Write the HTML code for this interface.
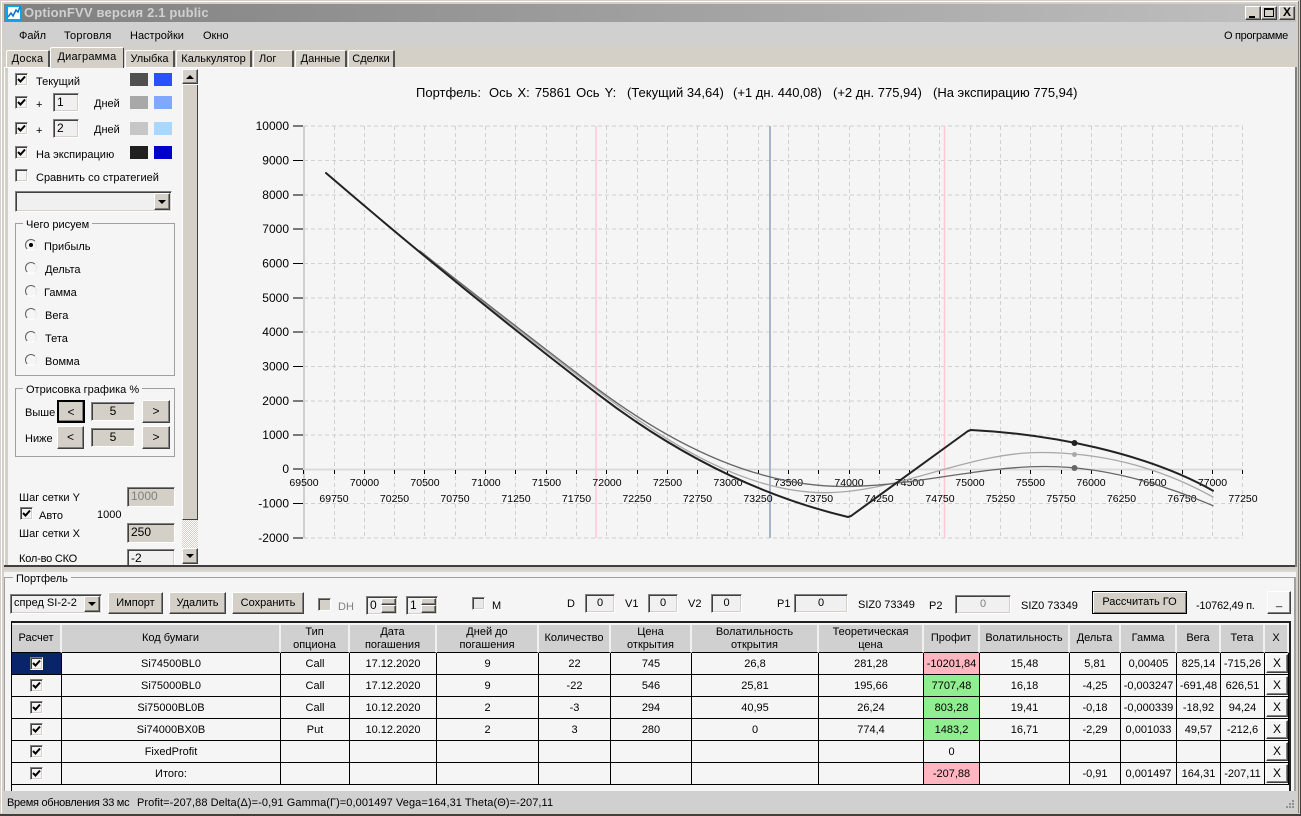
<!DOCTYPE html>
<html><head><meta charset="utf-8"><style>
html,body{margin:0;padding:0;width:1301px;height:816px;overflow:hidden;background:#d4d0c8}
body{font:11px "Liberation Sans","Noto Sans CJK SC",sans-serif;color:#000;position:relative}
div,span.a{position:absolute;box-sizing:border-box}
.t{position:absolute;white-space:nowrap;line-height:14px;height:14px;margin-top:1px}
.h{font-size:13px}
.g{color:#808080}
.sk{background:#f0f0f0;border:1px solid;border-color:#808080 #fff #fff #808080;box-shadow:inset 1px 1px 0 #404040,inset -1px -1px 0 #d4d0c8;text-align:center;line-height:17px;white-space:nowrap}
.rb{background:#d4d0c8;border:1px solid;border-color:#fff #404040 #404040 #fff;box-shadow:inset -1px -1px 0 #808080;text-align:center;white-space:nowrap}
.cb{width:13px;height:13px;background:#f5f5f5;border:1px solid;border-color:#808080 #fff #fff #808080;box-shadow:inset 1px 1px 0 #404040,inset -1px -1px 0 #d4d0c8}
.cb svg{position:absolute;left:1px;top:1px}
.rd{width:12px;height:12px;border-radius:50%;background:#f5f5f5;border:1px solid;border-color:#606060 #e8e8e8 #fff #606060}
.gb{border:1px solid #a0a0a0}
.lg{position:absolute;background:#f5f5f5;padding:0 3px;line-height:14px;white-space:nowrap}
.tab{background:#d4d0c8;border-top:1px solid #fff;border-left:1px solid #fff;border-right:2px solid #505050;text-align:center;line-height:17px;border-radius:2px 2px 0 0}
.sw{width:18px;height:13px}
table{position:absolute;left:12px;top:625px;border-collapse:separate;border-spacing:0;table-layout:fixed;width:1277px}
th{background:#d0d0d0;font-weight:normal;height:28px;padding:0;border-right:2px solid #f0f0f0;border-bottom:1px solid #000;line-height:13px;overflow:hidden;box-sizing:border-box}
td{height:22px;padding:0;text-align:center;border-right:1px solid #000;border-bottom:1px solid #000;background:#f5f5f5;box-sizing:border-box;position:relative;white-space:nowrap;overflow:hidden}
.r{background:#ffb6c1}.n{background:#90ee90}.s{background:#0a246a}
td .cb{left:18px;top:4px}
.x{left:1px;top:1px;width:22px;height:19px;line-height:17px;background:#f5f5f5;font-size:12px}
</style></head><body>
<svg width="0" height="0" style="position:absolute"><symbol id="ck" viewBox="0 0 9 9"><path d="M1 4l2.5 2.5L8 1.5" fill="none" stroke="#000" stroke-width="2"/></symbol></svg>

<!-- window chrome -->
<div style="left:0;top:0;width:1301px;height:816px;background:#d4d0c8;border-right:1px solid #404040;border-bottom:2px solid #404040"></div>
<div style="left:1px;top:1px;width:1298px;height:1px;background:#fff"></div>
<div style="left:1px;top:1px;width:1px;height:812px;background:#fff"></div>
<div style="left:1298px;top:1px;width:1px;height:812px;background:#808080"></div>
<div style="left:4px;top:4px;width:1292px;height:18px;background:linear-gradient(90deg,#808080,#c0c0c0)"></div>
<div style="left:6px;top:5px;width:16px;height:16px;background:#0aa5e8"><svg width="16" height="16"><rect x="2" y="2" width="12" height="12" fill="#fff"/><path d="M2 12l3-4 2 3 3-6 2 2 2-5" fill="none" stroke="#0a70d0" stroke-width="1.5"/></svg></div>
<div class="t" style="left:24px;top:5px;font-weight:bold;font-size:13px;letter-spacing:.17px;color:#d0d0d0">OptionFVV версия 2.1 public</div>
<div class="rb" style="left:1245px;top:6px;width:16px;height:14px"><div style="left:3px;top:9px;width:6px;height:2px;background:#000"></div></div>
<div class="rb" style="left:1261px;top:6px;width:16px;height:14px"><div style="left:2px;top:1px;width:10px;height:9px;border:1px solid #000;border-top-width:2px"></div></div>
<div class="rb" style="left:1279px;top:6px;width:16px;height:14px;font-weight:bold;line-height:11px;font-size:12px">X</div>

<div style="left:4px;top:22px;width:1292px;height:24px;background:#d0d0d0"></div>
<div class="t" style="left:19px;top:28px">Файл</div>
<div class="t" style="left:64px;top:28px;letter-spacing:.2px">Торговля</div>
<div class="t" style="left:130px;top:28px">Настройки</div>
<div class="t" style="left:203px;top:28px">Окно</div>
<div class="t" style="left:1224px;top:28px;letter-spacing:-.3px">О программе</div>

<!-- tabs -->
<div class="tab" style="left:6px;top:50px;width:44px;height:17px;letter-spacing:.3px">Доска</div>
<div class="tab" style="left:50px;top:47px;width:74px;height:21px;z-index:2;line-height:19px;border-right:1px solid #404040;letter-spacing:.2px">Диаграмма</div>
<div class="tab" style="left:125px;top:50px;width:50px;height:17px">Улыбка</div>
<div class="tab" style="left:176px;top:50px;width:76px;height:17px">Калькулятор</div>
<div class="tab" style="left:253px;top:50px;width:41px;height:17px;text-align:left;padding-left:5px">Лог</div>
<div class="tab" style="left:295px;top:50px;width:52px;height:17px">Данные</div>
<div class="tab" style="left:348px;top:50px;width:47px;height:17px">Сделки</div>

<!-- main panel -->
<div style="left:4px;top:67px;width:1292px;height:500px;background:#d4d0c8;border-top:1px solid #fff;border-left:1px solid #fff"></div>
<div style="left:8px;top:68px;width:1287px;height:497px;background:#f5f5f5"></div>
<div style="left:4px;top:565px;width:1292px;height:2px;background:#404040"></div>
<div style="left:1295px;top:67px;width:2px;height:500px;background:#808080"></div>

<!-- scrollbar -->
<div style="left:182px;top:85px;width:16px;height:435px;background:#d4d0c8;border-right:1px solid #404040;border-bottom:1px solid #404040;border-left:1px solid #fff"></div>
<div style="left:182px;top:520px;width:16px;height:28px;background:repeating-conic-gradient(#d4d0c8 0 25%,#fff 0 50%) 0 0/2px 2px"></div>
<div class="rb" style="left:182px;top:69px;width:16px;height:15px"><svg width="12" height="12" style="position:absolute;left:1px;top:1px"><path d="M2 8h8L6 4z"/></svg></div>
<div class="rb" style="left:182px;top:548px;width:16px;height:16px"><svg width="12" height="12" style="position:absolute;left:1px;top:1px"><path d="M2 4h8L6 8z"/></svg></div>

<!-- left controls -->
<div class="cb" style="left:15px;top:73px"><svg width="9" height="9"><use href="#ck"/></svg></div>
<div class="t" style="left:36px;top:74px">Текущий</div>
<div class="sw" style="left:130px;top:73px;background:#505050"></div><div class="sw" style="left:154px;top:73px;background:#2a50ff"></div>

<div class="cb" style="left:15px;top:96px"><svg width="9" height="9"><use href="#ck"/></svg></div>
<div class="t" style="left:36px;top:97px">+</div>
<div class="sk" style="left:53px;top:93px;width:26px;height:19px;text-align:left;padding-left:3px;font-size:12px">1</div>
<div class="t" style="left:94px;top:96px">Дней</div>
<div class="sw" style="left:130px;top:96px;background:#a8a8a8"></div><div class="sw" style="left:154px;top:96px;background:#7fa8ff"></div>

<div class="cb" style="left:15px;top:122px"><svg width="9" height="9"><use href="#ck"/></svg></div>
<div class="t" style="left:36px;top:123px">+</div>
<div class="sk" style="left:53px;top:119px;width:26px;height:19px;text-align:left;padding-left:3px;font-size:12px">2</div>
<div class="t" style="left:94px;top:122px">Дней</div>
<div class="sw" style="left:130px;top:122px;background:#c6c6c6"></div><div class="sw" style="left:154px;top:122px;background:#a8d8ff"></div>

<div class="cb" style="left:15px;top:146px"><svg width="9" height="9"><use href="#ck"/></svg></div>
<div class="t" style="left:36px;top:147px">На экспирацию</div>
<div class="sw" style="left:130px;top:146px;background:#202020"></div><div class="sw" style="left:154px;top:146px;background:#0000cc"></div>

<div class="cb" style="left:15px;top:169px"></div>
<div class="t" style="left:36px;top:170px">Сравнить со стратегией</div>

<div class="sk" style="left:15px;top:191px;width:157px;height:21px"></div>
<div class="rb" style="left:154px;top:193px;width:16px;height:17px"><svg width="12" height="12" style="position:absolute;left:1px;top:2px"><path d="M2 4h8L6 8z"/></svg></div>

<div class="gb" style="left:15px;top:223px;width:160px;height:153px"></div>
<div class="lg" style="left:23px;top:218px">Чего рисуем</div>
<div class="rd" style="left:25px;top:239px"><div style="left:3px;top:3px;width:4px;height:4px;background:#000;border-radius:50%"></div></div><div class="t" style="left:44px;top:239px">Прибыль</div>
<div class="rd" style="left:25px;top:262px"></div><div class="t" style="left:45px;top:262px">Дельта</div>
<div class="rd" style="left:25px;top:285px"></div><div class="t" style="left:44px;top:285px">Гамма</div>
<div class="rd" style="left:25px;top:308px"></div><div class="t" style="left:45px;top:308px">Вега</div>
<div class="rd" style="left:25px;top:331px"></div><div class="t" style="left:45px;top:331px">Тета</div>
<div class="rd" style="left:25px;top:354px"></div><div class="t" style="left:45px;top:354px">Вомма</div>

<div class="gb" style="left:15px;top:388px;width:160px;height:69px"></div>
<div class="lg" style="left:23px;top:383px">Отрисовка графика %</div>
<div class="t" style="left:25px;top:405px">Выше</div>
<div class="rb" style="left:57px;top:400px;width:28px;height:23px;line-height:20px;border:2px solid #000;font-size:12px">&lt;</div>
<div class="sk" style="left:91px;top:402px;width:44px;height:19px;background:#d4d0c8;font-size:12px">5</div>
<div class="rb" style="left:142px;top:400px;width:28px;height:23px;line-height:20px;font-size:12px">&gt;</div>
<div class="t" style="left:25px;top:431px">Ниже</div>
<div class="rb" style="left:57px;top:426px;width:27px;height:23px;line-height:20px;font-size:12px">&lt;</div>
<div class="sk" style="left:91px;top:428px;width:44px;height:19px;background:#d4d0c8;font-size:12px">5</div>
<div class="rb" style="left:142px;top:426px;width:28px;height:23px;line-height:20px;font-size:12px">&gt;</div>

<div class="t" style="left:19px;top:490px">Шаг сетки Y</div>
<div class="sk" style="left:127px;top:487px;width:48px;height:20px;background:#d4d0c8;color:#808080;text-align:left;padding-left:3px;font-size:12px">1000</div>
<div class="cb" style="left:20px;top:507px"><svg width="9" height="9"><use href="#ck"/></svg></div>
<div class="t" style="left:39px;top:508px">Авто</div>
<div class="t" style="left:97px;top:507px">1000</div>
<div class="t" style="left:19px;top:526px">Шаг сетки X</div>
<div class="sk" style="left:127px;top:523px;width:48px;height:20px;background:#d4d0c8;text-align:left;padding-left:3px;font-size:12px">250</div>
<div style="left:8px;top:549px;width:174px;height:16px;overflow:hidden">
  <div class="t" style="left:11px;top:2px;letter-spacing:-.2px">Кол-во СКО</div>
  <div class="sk" style="left:119px;top:0;width:48px;height:22px;background:#f0f0f0;text-align:left;padding-left:3px;font-size:12px">-2</div>
</div>

<!-- chart title -->
<div class="t h" style="left:416px;top:85px">Портфель:</div>
<div class="t h" style="left:489px;top:85px;word-spacing:1.5px">Ось X: 75861 Ось Y:</div>
<div class="t h" style="left:627px;top:85px">(Текущий 34,64)</div>
<div class="t h" style="left:733px;top:85px">(+1 дн. 440,08)</div>
<div class="t h" style="left:833px;top:85px">(+2 дн. 775,94)</div>
<div class="t h" style="left:933px;top:85px">(На экспирацию 775,94)</div>

<!-- chart -->
<svg width="1301" height="816" style="position:absolute;left:0;top:0;pointer-events:none" font-family="Liberation Sans, sans-serif">
<g fill="none" stroke="#d0d0d0" stroke-dasharray="4 3" stroke-width="1">
<path d="M304 126H1243M304 160.5H1243M304 195H1243M304 229H1243M304 263.5H1243M304 298H1243M304 332H1243M304 366.5H1243M304 401H1243M304 435H1243M304 503.5H1243M304 538H1243"/>
<path d="M334.5 126V538M364.5 126V538M394.5 126V538M424.5 126V538M455.5 126V538M485.5 126V538M515.5 126V538M546.5 126V538M576.5 126V538M606.5 126V538M637.5 126V538M667.5 126V538M697.5 126V538M727.5 126V538M758.5 126V538M788.5 126V538M818.5 126V538M849.5 126V538M879.5 126V538M909.5 126V538M939.5 126V538M970.5 126V538M1000.5 126V538M1030.5 126V538M1061.5 126V538M1091.5 126V538M1121.5 126V538M1152.5 126V538M1182.5 126V538M1212.5 126V538M1242.5 126V538"/>
</g>
<path d="M304 126V538" stroke="#d0d0d0" stroke-width="2"/>
<path d="M303 469.5H1243" stroke="#dadada" stroke-width="2"/>
<path d="M293 126H303M293 160.5H303M293 195H303M293 229H303M293 263.5H303M293 298H303M293 332H303M293 366.5H303M293 401H303M293 435H303M293 469H303M293 503.5H303M293 538H303" stroke="#000"/>
<path d="M303.5 470v4M334.5 470v4M364.5 470v4M394.5 470v4M424.5 470v4M455.5 470v4M485.5 470v4M515.5 470v4M546.5 470v4M576.5 470v4M606.5 470v4M637.5 470v4M667.5 470v4M697.5 470v4M727.5 470v4M758.5 470v4M788.5 470v4M818.5 470v4M849.5 470v4M879.5 470v4M909.5 470v4M939.5 470v4M970.5 470v4M1000.5 470v4M1030.5 470v4M1061.5 470v4M1091.5 470v4M1121.5 470v4M1152.5 470v4M1182.5 470v4M1212.5 470v4M1242.5 470v4" stroke="#000"/>
<path d="M596 126V538M944.5 126V538" stroke="#ffc8d0" stroke-width="1.5"/>
<path d="M770 126V538" stroke="#a8b4c8" stroke-width="2"/>
<g font-size="12" text-anchor="end" fill="#000">
<text x="289" y="130">10000</text><text x="289" y="164.5">9000</text><text x="289" y="199">8000</text><text x="289" y="233">7000</text><text x="289" y="267.5">6000</text><text x="289" y="302">5000</text><text x="289" y="336">4000</text><text x="289" y="370.5">3000</text><text x="289" y="405">2000</text><text x="289" y="439">1000</text><text x="289" y="473">0</text><text x="289" y="507.5">-1000</text><text x="289" y="542">-2000</text>
</g>
<g font-size="10.5" text-anchor="middle" fill="#000">
<text x="304" y="486">69500</text><text x="364.5" y="486">70000</text><text x="425" y="486">70500</text><text x="486" y="486">71000</text><text x="546.5" y="486">71500</text><text x="607" y="486">72000</text><text x="667.5" y="486">72500</text><text x="728" y="486">73000</text><text x="788.5" y="486">73500</text><text x="849" y="486">74000</text><text x="909.5" y="486">74500</text><text x="970" y="486">75000</text><text x="1030.5" y="486">75500</text><text x="1091" y="486">76000</text><text x="1152" y="486">76500</text><text x="1212.5" y="486">77000</text>
<text x="334" y="502">69750</text><text x="394.5" y="502">70250</text><text x="455" y="502">70750</text><text x="516" y="502">71250</text><text x="576.5" y="502">71750</text><text x="637" y="502">72250</text><text x="697.5" y="502">72750</text><text x="758" y="502">73250</text><text x="818.5" y="502">73750</text><text x="879" y="502">74250</text><text x="940" y="502">74750</text><text x="1000.5" y="502">75250</text><text x="1061" y="502">75750</text><text x="1121.5" y="502">76250</text><text x="1182" y="502">76750</text><text x="1243" y="502">77250</text>
</g>
<g fill="none" stroke-linejoin="round" stroke-linecap="round">
<path stroke="#a8a8a8" stroke-width="1.3" d="M420 252C479 299 538 345.5 596.7 390C673 448 749 492.7 825 492.7C897 492.7 968 452.5 1040 452.5C1098 452.5 1155 465 1213 497"/>
<path stroke="#666" stroke-width="1.3" d="M420 251C479 298 538 343.5 596.7 388.3C680 450.5 762 486.5 845 486.5C912 486.5 978 466.5 1045 466.5C1101 466.5 1157 481.6 1213 505.7"/>
<path stroke="#222" stroke-width="2" d="M326 173Q461.35 289.4 596.7 393.3C680.5 457.7 764.2 497 848 517L851 516L968 431L971 430C1050 434 1145 452.5 1213 490.7"/>
<circle cx="1074.5" cy="443" r="3" fill="#222"/><circle cx="1074.5" cy="454.5" r="2.5" fill="#aaa"/><circle cx="1074.5" cy="468" r="3" fill="#666"/>
</g>
</svg>

<!-- bottom group -->
<div style="left:4px;top:570px;width:1292px;height:221px;background:#f5f5f5;border-top:2px solid #d8d8d8"></div>
<div class="gb" style="left:4px;top:577px;width:1292px;height:215px;border-bottom:0;border-right:2px solid #a0a0a0"></div>
<div class="lg" style="left:13px;top:572px">Портфель</div>

<div class="sk" style="left:10px;top:594px;width:92px;height:20px;text-align:left;padding-left:3px;white-space:nowrap">спред SI-2-2</div>
<div class="rb" style="left:84px;top:596px;width:16px;height:16px"><svg width="12" height="12" style="position:absolute;left:1px;top:1px"><path d="M2 4h8L6 8z"/></svg></div>
<div class="rb" style="left:108px;top:592px;width:55px;height:22px;line-height:20px">Импорт</div>
<div class="rb" style="left:169px;top:592px;width:57px;height:22px;line-height:20px">Удалить</div>
<div class="rb" style="left:232px;top:592px;width:72px;height:22px;line-height:20px">Сохранить</div>
<div class="cb" style="left:318px;top:598px;background:#d4d0c8"></div>
<div class="t g" style="left:338px;top:599px">DH</div>
<div class="sk" style="left:366px;top:596px;width:32px;height:19px;text-align:left;padding-left:3px;font-size:12px">0</div>
<div class="rb" style="left:381px;top:598px;width:15px;height:7px"></div><div class="rb" style="left:381px;top:605px;width:15px;height:8px"></div>
<div class="sk" style="left:406px;top:596px;width:32px;height:19px;text-align:left;padding-left:3px;font-size:12px">1</div>
<div class="rb" style="left:421px;top:598px;width:15px;height:7px"></div><div class="rb" style="left:421px;top:605px;width:15px;height:8px"></div>
<div class="cb" style="left:472px;top:597px;background:#e8e8e8"></div>
<div class="t" style="left:492px;top:598px">M</div>
<div class="t" style="left:567px;top:596px">D</div>
<div class="sk" style="left:585px;top:594px;width:30px;height:19px">0</div>
<div class="t" style="left:625px;top:596px">V1</div>
<div class="sk" style="left:648px;top:594px;width:30px;height:19px">0</div>
<div class="t" style="left:688px;top:596px">V2</div>
<div class="sk" style="left:711px;top:594px;width:31px;height:19px">0</div>
<div class="t" style="left:777px;top:596px">P1</div>
<div class="sk" style="left:794px;top:594px;width:54px;height:19px">0</div>
<div class="t" style="left:858px;top:597px">SIZ0 73349</div>
<div class="t" style="left:929px;top:598px">P2</div>
<div class="sk" style="left:955px;top:595px;width:56px;height:19px;color:#808080">0</div>
<div class="t" style="left:1021px;top:598px">SIZ0 73349</div>
<div class="rb" style="left:1092px;top:591px;width:95px;height:23px;line-height:21px;border:1px solid #000;box-shadow:inset 1px 1px 0 #fff,inset -1px -1px 0 #808080">Рассчитать ГО</div>
<div class="t" style="left:1196px;top:598px;letter-spacing:-.25px">-10762,49 п.</div>
<div class="rb" style="left:1267px;top:591px;width:24px;height:23px;background:#f5f5f5;line-height:20px">_</div>

<!-- grid -->
<div style="left:11px;top:621px;width:1280px;height:170px;border:1px solid #000;border-bottom:0;border-right:2px solid #202020;border-top:2px solid #202020"></div>
<table>
<colgroup><col style="width:50px"><col style="width:219px"><col style="width:69px"><col style="width:87px"><col style="width:102px"><col style="width:72px"><col style="width:81px"><col style="width:127px"><col style="width:105px"><col style="width:56px"><col style="width:90px"><col style="width:51px"><col style="width:56px"><col style="width:44px"><col style="width:44px"><col style="width:24px"></colgroup>
<tr><th>Расчет</th><th>Код бумаги</th><th>Тип<br>опциона</th><th>Дата<br>погашения</th><th>Дней до<br>погашения</th><th>Количество</th><th>Цена<br>открытия</th><th>Волатильность<br>открытия</th><th>Теоретическая<br>цена</th><th>Профит</th><th>Волатильность</th><th>Дельта</th><th>Гамма</th><th>Вега</th><th>Тета</th><th>X</th></tr>
<tr><td class="s"><div class="cb"><svg width="9" height="9"><use href="#ck"/></svg></div></td><td>Si74500BL0</td><td>Call</td><td>17.12.2020</td><td>9</td><td>22</td><td>745</td><td>26,8</td><td>281,28</td><td class="r">-10201,84</td><td>15,48</td><td>5,81</td><td>0,00405</td><td>825,14</td><td>-715,26</td><td><div class="rb x">X</div></td></tr>
<tr><td><div class="cb"><svg width="9" height="9"><use href="#ck"/></svg></div></td><td>Si75000BL0</td><td>Call</td><td>17.12.2020</td><td>9</td><td>-22</td><td>546</td><td>25,81</td><td>195,66</td><td class="n">7707,48</td><td>16,18</td><td>-4,25</td><td>-0,003247</td><td>-691,48</td><td>626,51</td><td><div class="rb x">X</div></td></tr>
<tr><td><div class="cb"><svg width="9" height="9"><use href="#ck"/></svg></div></td><td>Si75000BL0B</td><td>Call</td><td>10.12.2020</td><td>2</td><td>-3</td><td>294</td><td>40,95</td><td>26,24</td><td class="n">803,28</td><td>19,41</td><td>-0,18</td><td>-0,000339</td><td>-18,92</td><td>94,24</td><td><div class="rb x">X</div></td></tr>
<tr><td><div class="cb"><svg width="9" height="9"><use href="#ck"/></svg></div></td><td>Si74000BX0B</td><td>Put</td><td>10.12.2020</td><td>2</td><td>3</td><td>280</td><td>0</td><td>774,4</td><td class="n">1483,2</td><td>16,71</td><td>-2,29</td><td>0,001033</td><td>49,57</td><td>-212,6</td><td><div class="rb x">X</div></td></tr>
<tr><td><div class="cb"><svg width="9" height="9"><use href="#ck"/></svg></div></td><td>FixedProfit</td><td></td><td></td><td></td><td></td><td></td><td></td><td></td><td>0</td><td></td><td></td><td></td><td></td><td></td><td><div class="rb x">X</div></td></tr>
<tr><td><div class="cb"><svg width="9" height="9"><use href="#ck"/></svg></div></td><td>Итого:</td><td></td><td></td><td></td><td></td><td></td><td></td><td></td><td class="r">-207,88</td><td></td><td>-0,91</td><td>0,001497</td><td>164,31</td><td>-207,11</td><td><div class="rb x">X</div></td></tr>
</table>

<!-- status -->
<div style="left:4px;top:791px;width:1292px;height:21px;background:#d0d0d0"></div>
<div class="t" style="left:7px;top:795px;letter-spacing:-.28px">Время обновления 33 мс</div>
<div class="t" style="left:137px;top:795px;letter-spacing:.08px">Profit=-207,88 Delta(Δ)=-0,91 Gamma(Г)=0,001497 Vega=164,31 Theta(Θ)=-207,11</div>
<svg width="12" height="12" style="position:absolute;left:1283px;top:799px"><path d="M9 1h2v2H9zM6 4h2v2H6zM9 4h2v2H9zM3 7h2v2H3zM6 7h2v2H6zM9 7h2v2H9z" fill="#909090"/></svg>
</body></html>
